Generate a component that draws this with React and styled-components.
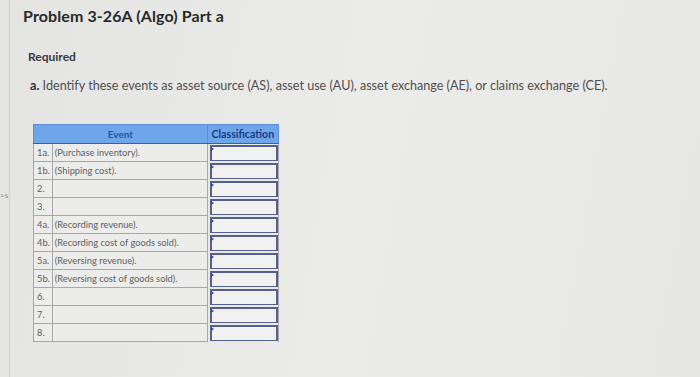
import styled, { createGlobalStyle } from "styled-components";

const GlobalStyle = createGlobalStyle`
  html, body {
    margin: 0;
    padding: 0;
    background: #e9e9e7;
  }
  body {
    font-family: "Lato", "Open Sans", sans-serif;
    color: #2b2b2b;
  }
`;

const Page = styled.div`
  display: flex;
  width: 700px;
  height: 377px;
  overflow: hidden;
  background: linear-gradient(100deg, #e4e4e2 0%, #ebebe9 50%, #e7e7e5 100%);
`;

const SideRail = styled.div`
  width: 9px;
  flex-shrink: 0;
  border-right: 1px solid #d2d2d0;
  display: flex;
  align-items: flex-start;
  padding-top: 190px;
  font-size: 8px;
  color: #8a8a8a;
  overflow: hidden;
`;

const Content = styled.div`
  flex: 1;
  padding: 6px 0 0 13px;
`;

const Title = styled.h1`
  margin: 0;
  font-size: 16px;
  font-weight: 700;
  color: #2a2a2a;
  letter-spacing: 0.1px;
`;

const Required = styled.h2`
  margin: 24px 0 0 5px;
  font-size: 12px;
  font-weight: 700;
  color: #3a3a3a;
`;

const Instruction = styled.p`
  margin: 14px 0 0 7px;
  font-size: 12.6px;
  color: #505050;

  b {
    color: #333;
  }
`;

const Table = styled.table`
  margin: 31px 0 0 10px;
  border-collapse: collapse;
  font-size: 9.3px;
  color: #606060;
`;

const HeadCell = styled.th`
  height: 18px;
  padding: 0 2px;
  background: #6fa6ea;
  color: ${(p) => (p.dark ? "#163d86" : "#1f56a8")};
  font-weight: 700;
  font-size: ${(p) => (p.dark ? "10.6px" : "10px")};
  border: 1px solid #5c8fd6;
  border-bottom: 1px solid #3f5f9a;
  text-align: center;
`;

const NumCell = styled.td`
  width: 10px;
  height: 17px;
  padding: 0 2px 0 3px;
  border: 1px solid #a8a8a8;
  background: #ececea;
  white-space: nowrap;
`;

const TextCell = styled.td`
  width: 150px;
  padding: 0 2px;
  border: 1px solid #a8a8a8;
  background: #ececea;
  white-space: nowrap;
`;

const InputCell = styled.td`
  width: 68px;
  padding: 1px 0 0 2px;
  border: none;
  border-right: 1px solid #a8a8a8;
`;

const InputBox = styled.div`
  position: relative;
  height: 13px;
  border: 2px solid #55618c;
  border-bottom-width: 1px;
  background: #f1f1f0;

  &::before {
    content: "";
    position: absolute;
    left: -1px;
    top: 0;
    border-left: 3px solid #3a4a8a;
    border-top: 2px solid transparent;
    border-bottom: 2px solid transparent;
  }
`;

const rows = [
  ["1a.", "(Purchase inventory)."],
  ["1b.", "(Shipping cost)."],
  ["2.", ""],
  ["3.", ""],
  ["4a.", "(Recording revenue)."],
  ["4b.", "(Recording cost of goods sold)."],
  ["5a.", "(Reversing revenue)."],
  ["5b.", "(Reversing cost of goods sold)."],
  ["6.", ""],
  ["7.", ""],
  ["8.", ""],
];

export default function App() {
  return (
    <>
      <GlobalStyle />
      <Page>
        <SideRail>≈s</SideRail>
        <Content>
          <Title>Problem 3-26A (Algo) Part a</Title>
          <Required>Required</Required>
          <Instruction>
            <b>a.</b> Identify these events as asset source (AS), asset use (AU),
            asset exchange (AE), or claims exchange (CE).
          </Instruction>
          <Table>
            <thead>
              <tr>
                <HeadCell colSpan={2}>Event</HeadCell>
                <HeadCell dark>Classification</HeadCell>
              </tr>
            </thead>
            <tbody>
              {rows.map(([num, text]) => (
                <tr key={num}>
                  <NumCell>{num}</NumCell>
                  <TextCell>{text}</TextCell>
                  <InputCell>
                    <InputBox />
                  </InputCell>
                </tr>
              ))}
            </tbody>
          </Table>
        </Content>
      </Page>
    </>
  );
}
